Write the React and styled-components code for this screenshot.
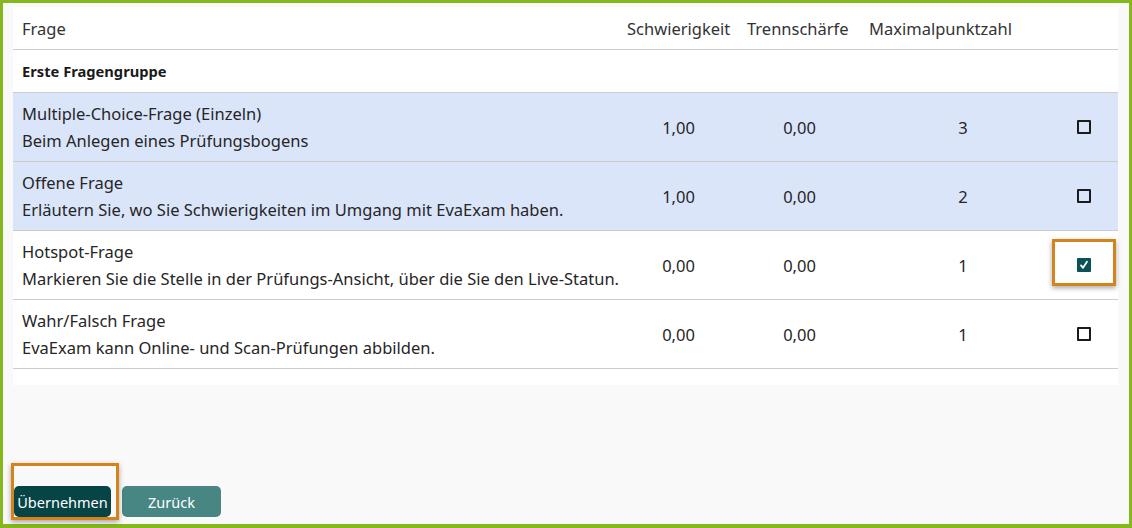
import React, { useState } from 'react'
import styled, { createGlobalStyle } from 'styled-components'

const GlobalStyle = createGlobalStyle`
  html, body { margin: 0; padding: 0; }
  body { font-family: "Noto Sans", "DejaVu Sans", sans-serif; }
  * { box-sizing: border-box; }
`

const questions = [
  { title: 'Multiple-Choice-Frage (Einzeln)', text: 'Beim Anlegen eines Prüfungsbogens', diff: '1,00', sep: '0,00', max: 3, highlight: true },
  { title: 'Offene Frage', text: 'Erläutern Sie, wo Sie Schwierigkeiten im Umgang mit EvaExam haben.', diff: '1,00', sep: '0,00', max: 2, highlight: true },
  { title: 'Hotspot-Frage', text: 'Markieren Sie die Stelle in der Prüfungs-Ansicht, über die Sie den Live-Statun.', diff: '0,00', sep: '0,00', max: 1, checked: true, marked: true },
  { title: 'Wahr/Falsch Frage', text: 'EvaExam kann Online- und Scan-Prüfungen abbilden.', diff: '0,00', sep: '0,00', max: 1 },
]

const App = () => {
  const [checked, setChecked] = useState(questions.map(q => !!q.checked))

  const toggle = i => () => {
    setChecked(checked.map((c, j) => (j === i ? !c : c)))
  }

  return (
    <>
      <GlobalStyle />
      <Frame>
        <Panel>
          <HeadRow>
            <HeadCell>Frage</HeadCell>
            <HeadCell>Schwierigkeit</HeadCell>
            <HeadCell $tight>Trennschärfe</HeadCell>
            <HeadCell>Maximalpunktzahl</HeadCell>
            <HeadCell />
          </HeadRow>
          <GroupRow>Erste Fragengruppe</GroupRow>
          {questions.map((q, i) => (
            <Row key={q.title} $highlight={q.highlight}>
              <QuestionCell>
                <div>{q.title}</div>
                <div>{q.text}</div>
              </QuestionCell>
              <ValueCell>{q.diff}</ValueCell>
              <ValueCell>{q.sep}</ValueCell>
              <ValueCell>{q.max}</ValueCell>
              <CheckCell>
                <Check $checked={checked[i]} onClick={toggle(i)}>
                  {checked[i] && (
                    <svg width="12" height="12" viewBox="0 0 12 12">
                      <path d="M3 6.4 L5 8.8 L9 2.8" fill="none" stroke="#fff" strokeWidth="1.8" strokeLinecap="round" strokeLinejoin="round" />
                    </svg>
                  )}
                </Check>
                {q.marked && <Marker />}
              </CheckCell>
            </Row>
          ))}
          <PanelEnd />
        </Panel>
        <Footer>
          <ButtonWrap>
            <Button $primary>Übernehmen</Button>
            <ButtonMarker />
          </ButtonWrap>
          <Button>Zurück</Button>
        </Footer>
      </Frame>
    </>
  )
}

const Frame = styled.div`
  width: 1132px;
  height: 528px;
  border: 3px solid #84b81d;
  border-bottom-width: 4px;
  background: #f9f9f9;
  display: flex;
  flex-direction: column;
  padding: 4px 11px 7px 10px;
`

const Panel = styled.div`
  background: #fff;
  color: #262626;
`

const columns = `604px 123px 119px 208px 1fr`

const HeadRow = styled.div`
  display: grid;
  grid-template-columns: ${columns};
  height: 43px;
  align-items: center;
  border-bottom: 1px solid #cccccc;
  font-size: 16.5px;
  color: #333;
`

const HeadCell = styled.div`
  padding-left: ${p => (p.$tight ? '7px' : '10px')};
  white-space: nowrap;
  &:first-child { padding-left: 9px; }
`

const GroupRow = styled.div`
  height: 43px;
  display: flex;
  align-items: center;
  padding-left: 9px;
  font-size: 14.7px;
  font-weight: 700;
  color: #1a1a1a;
  border-bottom: 1px solid #cccccc;
`

const Row = styled.div`
  display: grid;
  grid-template-columns: ${columns};
  height: 69px;
  align-items: center;
  border-bottom: 1px solid #cccccc;
  background: ${p => (p.$highlight ? '#dbe5fa' : '#fff')};
  font-size: 16.5px;
`

const QuestionCell = styled.div`
  padding-left: 9px;
  line-height: 27px;
  white-space: nowrap;
`

const ValueCell = styled.div`
  text-align: center;
`

const CheckCell = styled.div`
  position: relative;
  align-self: stretch;
  padding-left: 10px;
  display: flex;
  align-items: center;
`

const Check = styled.span`
  width: 14px;
  height: 14px;
  border: ${p => (p.$checked ? 'none' : '2px solid #1b1b1b')};
  border-radius: 1px;
  background: ${p => (p.$checked ? '#0b5257' : 'transparent')};
  display: flex;
  align-items: center;
  justify-content: center;
  cursor: pointer;
`

const Marker = styled.span`
  position: absolute;
  left: -15px;
  top: 8px;
  width: 64px;
  height: 47px;
  border: 3px solid #d4841a;
  box-shadow: 0 2px 5px rgba(0, 0, 0, 0.35);
  pointer-events: none;
`

const PanelEnd = styled.div`
  height: 16px;
`

const Footer = styled.div`
  margin-top: auto;
  display: flex;
  gap: 11px;
  padding-left: 1px;
`

const ButtonWrap = styled.div`
  position: relative;
`

const Button = styled.button`
  height: 31px;
  width: ${p => (p.$primary ? '97px' : '99px')};
  padding: 0;
  border: none;
  border-radius: 5px;
  background: ${p => (p.$primary ? '#074446' : '#478683')};
  color: #fff;
  font-family: "Noto Sans", "DejaVu Sans", sans-serif;
  font-size: 14.5px;
  white-space: nowrap;
  cursor: pointer;
`

const ButtonMarker = styled.span`
  position: absolute;
  left: -3px;
  top: -23px;
  width: 108px;
  height: 57px;
  border: 3px solid #d4841a;
  box-shadow: 0 2px 5px rgba(0, 0, 0, 0.35);
  pointer-events: none;
`

export default App
